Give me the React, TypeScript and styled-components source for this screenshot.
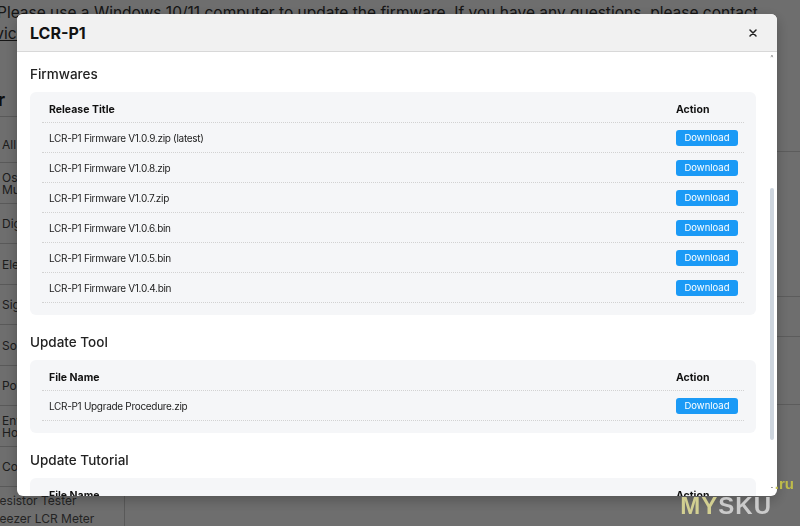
import styled, { createGlobalStyle } from 'styled-components';

const GlobalStyle = createGlobalStyle`
  html, body {
    margin: 0;
    padding: 0;
    width: 800px;
    height: 526px;
    overflow: hidden;
    background: #ffffff;
    font-family: Inter, "Noto Sans", "Liberation Sans", sans-serif;
    color: #333;
  }
  * { box-sizing: border-box; }
`;

/* ---------- page behind the dialog ---------- */

const Page = styled.div`
  width: 800px;
  height: 526px;
  overflow: hidden;
`;

const Notice = styled.p`
  margin: 2px 0 0 -3px;
  width: 790px;
  font-size: 15.5px;
  line-height: 21px;
  color: #333;
  white-space: nowrap;
`;

const NoticeLink = styled.a`
  display: block;
  margin-left: -25px;
  color: #333;
  text-decoration: underline;
`;

const Layout = styled.div`
  display: grid;
  grid-template-columns: 125px 1fr;
  margin-top: 44px;
`;

const Sidebar = styled.aside`
  border-right: 1px solid #cfcfcf;
  min-height: 500px;
`;

const SidebarTitle = styled.h3`
  margin: 0 0 0 -40px;
  height: 29px;
  font-size: 18px;
  font-weight: 700;
  line-height: 24px;
  color: #222;
  border-bottom: 1px solid #cfcfcf;
`;

const SideItem = styled.div<{ $first?: boolean }>`
  display: flex;
  align-items: center;
  height: ${(p) => (p.$first ? 46 : 40.5)}px;
  padding: ${(p) => (p.$first ? '10px' : '2px')} 0 0 2px;
  font-size: 12px;
  line-height: 12px;
  color: #444;
  border-bottom: 1px solid #cfcfcf;
`;

const SubList = styled.div`
  padding-top: 5px;
`;

const SubItem = styled.div<{ $shift: number }>`
  margin-left: ${(p) => p.$shift}px;
  font-size: 12px;
  line-height: 18px;
  color: #555;
  white-space: nowrap;
`;

const Main = styled.main`
  display: flex;
  flex-direction: column;
`;

const MainRow = styled.div<{ $h: number }>`
  height: ${(p) => p.$h}px;
  border-bottom: 1px solid #d6d6d6;
`;

/* ---------- dialog ---------- */

const Overlay = styled.div`
  position: fixed;
  inset: 0;
  background: rgba(0, 0, 0, 0.57);
  display: flex;
  align-items: flex-start;
  padding: 14px 0 0 17px;
`;

const Modal = styled.div`
  width: 760px;
  height: 482px;
  display: flex;
  flex-direction: column;
  background: #ffffff;
  border-radius: 6px;
  overflow: hidden;
  box-shadow: 0 4px 14px rgba(0, 0, 0, 0.25);
`;

const ModalHeader = styled.header`
  flex: 0 0 38px;
  display: flex;
  align-items: center;
  justify-content: space-between;
  padding: 0 17px 0 13px;
  background: #f1f1f1;
  border-bottom: 1px solid #d8d8d8;
`;

const ModalTitle = styled.h2`
  margin: 0;
  font-size: 16px;
  font-weight: 700;
  color: #111;
`;

const CloseButton = styled.button`
  width: 14px;
  height: 14px;
  padding: 0;
  border: none;
  background: transparent;
  display: flex;
  align-items: center;
  justify-content: center;
  cursor: pointer;
`;

const ModalBody = styled.div`
  position: relative;
  flex: 1;
  overflow: hidden;
  padding: 12px 21px 0 13px;
`;

const SectionTitle = styled.h3<{ $first?: boolean }>`
  margin: ${(p) => (p.$first ? '0' : '17px')} 0 8px;
  font-size: 13.5px;
  font-weight: 500;
  line-height: 20px;
  color: #222;
`;

const Card = styled.div`
  background: #f5f6f8;
  border-radius: 6px;
  padding: 8px 12px 12px;
`;

const Row = styled.div<{ $head?: boolean }>`
  display: grid;
  grid-template-columns: 1fr 75px;
  align-items: center;
  height: ${(p) => (p.$head ? 23 : 30)}px;
  border-bottom: 1px dotted #d2d2d2;
`;

const Cell = styled.div<{ $head?: boolean }>`
  padding: 0 7px;
  font-size: ${(p) => (p.$head ? '10.5px' : '10px')};
  font-weight: ${(p) => (p.$head ? 700 : 400)};
  letter-spacing: ${(p) => (p.$head ? '0' : '-0.3px')};
  color: ${(p) => (p.$head ? '#111' : '#222')};
  white-space: nowrap;
  margin-top: ${(p) => (p.$head ? '-4px' : '0')};
`;

const DownloadButton = styled.button`
  width: 62px;
  height: 16px;
  padding: 0;
  border: none;
  border-radius: 3px;
  background: #1b9af6;
  color: #ffffff;
  font-family: inherit;
  font-size: 9.5px;
  line-height: 16px;
  cursor: pointer;
`;

const ScrollTrack = styled.div`
  position: absolute;
  top: 0;
  right: 0;
  bottom: 0;
  width: 10px;
  display: flex;
  flex-direction: column;
  align-items: center;
  justify-content: space-between;
  padding: 2px 0 3px;
`;

const ScrollArrow = styled.span`
  font-size: 7px;
  line-height: 7px;
  color: #777;
`;

const ScrollThumb = styled.div`
  position: absolute;
  left: 3px;
  top: 136px;
  width: 4px;
  height: 252px;
  border-radius: 2px;
  background: #cdd5de;
`;

const Watermark = styled.div`
  position: absolute;
  right: 28px;
  bottom: 6px;
  font-family: "Liberation Sans", Arial, sans-serif;
  font-size: 24px;
  font-weight: 700;
  letter-spacing: 1px;
  color: rgba(220, 220, 220, 0.85);
`;

const WatermarkMy = styled.span`
  color: rgba(222, 218, 150, 0.9);
`;

const WatermarkRu = styled.span`
  position: absolute;
  top: -17px;
  right: -22px;
  font-size: 15px;
  letter-spacing: 0;
  color: rgba(200, 196, 70, 0.9);
`;

const firmwares = [
  'LCR-P1 Firmware V1.0.9.zip (latest)',
  'LCR-P1 Firmware V1.0.8.zip',
  'LCR-P1 Firmware V1.0.7.zip',
  'LCR-P1 Firmware V1.0.6.bin',
  'LCR-P1 Firmware V1.0.5.bin',
  'LCR-P1 Firmware V1.0.4.bin',
];

const categories = [
  'All Products',
  'Oscilloscope Multimeter',
  'Digital Multimeter',
  'Electronic Load',
  'Signal Generator',
  'Soldering Station',
  'Power Supply',
  'Environmental Horticulture',
  'Component Tester',
];

const FileTable = ({ title, files }: { title: string; files: string[] }) => (
  <Card>
    <Row $head>
      <Cell $head>{title}</Cell>
      <Cell $head>Action</Cell>
    </Row>
    {files.map((f) => (
      <Row key={f}>
        <Cell>{f}</Cell>
        <Cell>
          <DownloadButton>Download</DownloadButton>
        </Cell>
      </Row>
    ))}
  </Card>
);

const App = () => {
  return (
    <>
      <GlobalStyle />
      <Page>
        <Notice>
          Please use a Windows 10/11 computer to update the firmware. If you have any questions, please contact
          <NoticeLink>service</NoticeLink>
        </Notice>
        <Layout>
          <Sidebar>
            <SidebarTitle>Filter</SidebarTitle>
            {categories.map((c, i) => (
              <SideItem key={c} $first={i === 0}>
                {c}
              </SideItem>
            ))}
            <SubList>
              <SubItem $shift={-8}>Resistor Tester</SubItem>
              <SubItem $shift={-17}>Tweezer LCR Meter</SubItem>
            </SubList>
          </Sidebar>
          <Main>
            <MainRow $h={64} />
            <MainRow $h={145} />
            <MainRow $h={40} />
            <MainRow $h={68} />
          </Main>
        </Layout>
      </Page>

      <Overlay>
        <Modal>
          <ModalHeader>
            <ModalTitle>LCR-P1</ModalTitle>
            <CloseButton aria-label="Close">
              <svg width="8" height="8" viewBox="0 0 8 8">
                <path d="M1 1L7 7M7 1L1 7" stroke="#222" strokeWidth="1.5" strokeLinecap="round" />
              </svg>
            </CloseButton>
          </ModalHeader>
          <ModalBody>
            <SectionTitle $first>Firmwares</SectionTitle>
            <FileTable title="Release Title" files={firmwares} />
            <SectionTitle>Update Tool</SectionTitle>
            <FileTable title="File Name" files={['LCR-P1 Upgrade Procedure.zip']} />
            <SectionTitle>Update Tutorial</SectionTitle>
            <FileTable title="File Name" files={['LCR-P1 Update Tutorial.pdf']} />
            <ScrollTrack>
              <ScrollArrow>^</ScrollArrow>
              <ScrollThumb />
              <ScrollArrow>ˇ</ScrollArrow>
            </ScrollTrack>
          </ModalBody>
        </Modal>
        <Watermark>
          <WatermarkMy>MY</WatermarkMy>SKU
          <WatermarkRu>.ru</WatermarkRu>
        </Watermark>
      </Overlay>
    </>
  );
};

export default App;
